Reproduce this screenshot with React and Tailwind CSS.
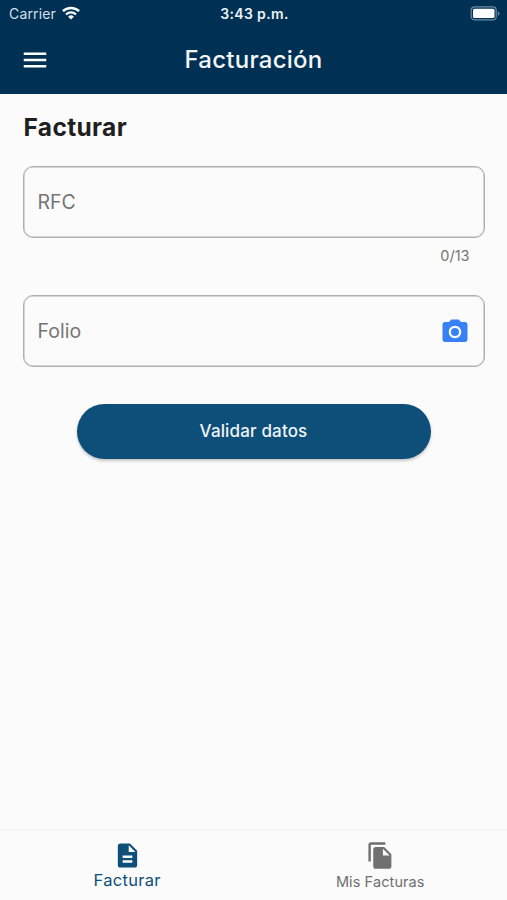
import {
  MdCameraAlt,
  MdDescription,
  MdFileCopy,
  MdMenu,
} from "react-icons/md";

const StatusBar = () => {
  return (
    <div className="flex h-7 items-center justify-between pl-[9px] pr-[7px] text-white">
      <div className="flex w-[120px] items-center gap-[5px]">
        <span className="text-[14px] leading-none tracking-[0.15px] text-[#d5e0ea]">Carrier</span>
        <svg width="20" height="14" viewBox="0 0 20 14" fill="none" className="-mt-[2px]">
          <path d="M1.9 5.2a11.6 11.6 0 0 1 16.2 0" stroke="white" strokeWidth="2.5" />
          <path d="M5 8.5a7.1 7.1 0 0 1 10 0" stroke="white" strokeWidth="2.2" />
          <path d="M10 13.6 7.1 10.7a4.1 4.1 0 0 1 5.8 0z" fill="white" />
        </svg>
      </div>
      <span className="text-[14px] font-semibold leading-none tracking-[0.35px] text-[#eaf0f5]">
        3:43 p.m.
      </span>
      <div className="flex w-[120px] justify-end">
        <svg width="30" height="15" viewBox="0 0 30 15" fill="none" className="-mt-[2px]">
          <rect x="1.2" y="0.9" width="25" height="13" rx="3.5" stroke="#6f8ba4" strokeWidth="1.2" />
          <rect x="3" y="2.7" width="21.5" height="9.4" rx="1.5" fill="white" />
          <path d="M27.8 5.2c2.2 1 2.2 3.6 0 4.6z" fill="#6f8ba4" />
        </svg>
      </div>
    </div>
  );
};

const Header = () => {
  return (
    <header className="h-[94px] bg-[#003053]">
      <StatusBar />
      <div className="grid h-[64px] grid-cols-[70px_1fr_70px] items-center">
        <button className="flex justify-center">
          <MdMenu className="size-[30px] text-white" />
        </button>
        <h1 className="text-center text-[24px] font-medium leading-none tracking-[0.25px] text-[#f2f6f9]">
          Facturación
        </h1>
      </div>
    </header>
  );
};

const Campo = ({ label, children }) => {
  return (
    <div className="flex h-[72px] items-center justify-between rounded-[10px] border border-[#b0b0b0] pl-[14px] pr-[13.5px] pt-px shadow-[inset_0_0_0_0.5px_#b0b0b0]">
      <span className="pt-px text-[19.5px] leading-none text-[#757575]">{label}</span>
      {children}
    </div>
  );
};

const BottomNav = () => {
  return (
    <nav className="grid h-[71px] grid-cols-2 border-t border-[#f3f3f3]">
      <button className="flex flex-col items-center pl-px pt-[11px] text-[#0e4f7a]">
        <MdDescription className="size-[29px]" />
        <span className="mt-px text-[16.5px] leading-[18px] tracking-[0.3px]">Facturar</span>
      </button>
      <button className="flex flex-col items-center pt-[11px] text-[#707070]">
        <MdFileCopy className="size-[29px]" />
        <span className="mt-[3px] text-[14.5px] leading-[18px] tracking-[0.1px]">Mis Facturas</span>
      </button>
    </nav>
  );
};

const App = () => {
  return (
    <div className="flex h-[900px] w-[507px] flex-col overflow-hidden bg-[#fbfbfb] font-['Inter',sans-serif]">
      <Header />
      <main className="flex flex-1 flex-col px-[22.5px] pt-[18px]">
        <h2 className="pl-px text-[24.5px] font-bold leading-[30px] tracking-[0.35px] text-[#1f1f1f]">
          Facturar
        </h2>
        <div className="mt-[24px]">
          <Campo label="RFC" />
        </div>
        <p className="mt-[8px] pr-[15px] text-right text-[14.5px] leading-[20px] text-[#757575]">
          0/13
        </p>
        <div className="mt-[29px]">
          <Campo label="Folio">
            <MdCameraAlt className="size-[30px] text-[#3880f6]" />
          </Campo>
        </div>
        <button className="mt-[37px] h-[55px] w-[354px] self-center rounded-full bg-[#0e4f7a] pt-px text-[17px] font-medium tracking-[0.15px] text-[#eef4f8] shadow-[0_2px_3px_rgba(0,0,0,0.22)]">
          Validar datos
        </button>
      </main>
      <BottomNav />
    </div>
  );
};

export default App;
